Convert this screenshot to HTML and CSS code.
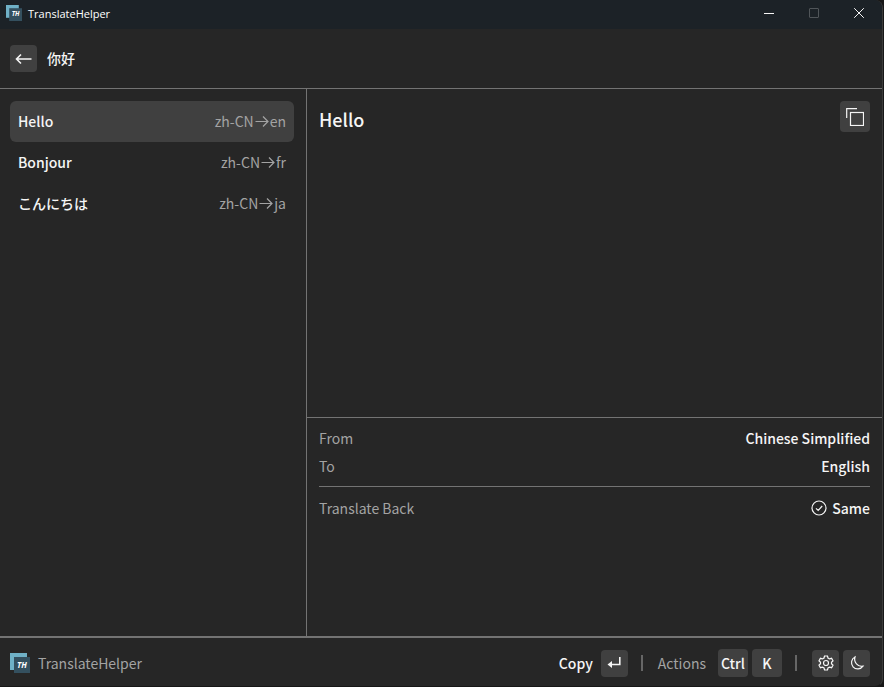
FILE: index.html
```
<!DOCTYPE html>
<html lang="en">
<head>
<meta charset="utf-8">
<title>TranslateHelper</title>
<meta name="viewport" content="width=device-width, initial-scale=1">
<link rel="stylesheet" href="styles.css">
</head>
<body>
<div class="window">
  <header class="titlebar">
    <svg class="logo-small" viewBox="0 0 20 20" aria-hidden="true"><path fill="#6fb1c7" d="M0 0h16v16H0z"/><path fill="#34505f" d="M4 4h16v16H4z"/><text x="12" y="14">TH</text></svg>
    <span class="window-title">TranslateHelper</span>
    <div class="window-controls">
      <button type="button" aria-label="Minimize"><svg viewBox="0 0 10 10"><path d="M0 5.500h10"/></svg></button>
      <button type="button" aria-label="Maximize" disabled><svg viewBox="0 0 10 10"><rect x=".5" y=".5" width="9" height="9" rx=".5"/></svg></button>
      <button type="button" aria-label="Close"><svg viewBox="0 0 10 10"><path d="M.2.2l9.600 9.600M9.800.2L.2 9.800"/></svg></button>
    </div>
  </header>
  <div class="query">
    <button class="key" type="button" aria-label="Back"><svg class="back-icon" viewBox="0 0 18 14"><path d="M16.500 7H1.500M6 2.500L1.500 7 6 11.500"/></svg></button>
    <h1 lang="zh-CN">你好</h1>
  </div>
  <main class="content">
    <ul class="results">
      <li><button class="result selected" type="button"><span>Hello</span><span class="pair">zh-CN<svg viewBox="0 0 14 14"><path d="M.5 7.500h12.500M8 2.500l5 5-5 5"/></svg>en</span></button></li>
      <li><button class="result" type="button"><span>Bonjour</span><span class="pair">zh-CN<svg viewBox="0 0 14 14"><path d="M.5 7.500h12.500M8 2.500l5 5-5 5"/></svg>fr</span></button></li>
      <li><button class="result" type="button"><span lang="ja">こんにちは</span><span class="pair">zh-CN<svg viewBox="0 0 14 14"><path d="M.5 7.500h12.500M8 2.500l5 5-5 5"/></svg>ja</span></button></li>
    </ul>
    <section class="detail">
      <div class="translation">
        <h2>Hello</h2>
        <button class="key copy" type="button" aria-label="Copy translation"><svg viewBox="0 0 18 18"><path d="M.7 10V.7H11"/><rect x="4.500" y="4.500" width="13" height="13"/></svg></button>
      </div>
      <dl class="meta">
        <div><dt>From</dt><dd>Chinese Simplified</dd></div>
        <div><dt>To</dt><dd>English</dd></div>
        <div class="back"><dt>Translate Back</dt><dd><svg viewBox="0 0 16 16"><circle cx="8" cy="8" r="7"/><path d="M5 8.300l2.200 2.200L11.200 6"/></svg>Same</dd></div>
      </dl>
    </section>
  </main>
  <footer class="statusbar">
    <svg class="logo" viewBox="0 0 20 20" aria-hidden="true"><path fill="#6fb1c7" d="M0 0h17v17H0z"/><path fill="#34505f" d="M4 4h16v16H4z"/><text x="12" y="15">TH</text></svg>
    <span class="app-name">TranslateHelper</span>
    <span class="copy-label">Copy</span>
    <button class="key" type="button" aria-label="Enter"><svg class="enter-icon" viewBox="0 0 14 12"><path d="M12.800 0v7.500H3"/><path class="solid" d="M5 4v7L.5 7.500z"/></svg></button>
    <span class="divider"></span>
    <span class="actions-label">Actions</span>
    <kbd class="key wide">Ctrl</kbd>
    <kbd class="key wide">K</kbd>
    <span class="divider"></span>
    <button class="key" type="button" aria-label="Settings"><svg class="round-icon" viewBox="0 0 16 16"><circle cx="8" cy="8" r="2.500"/><path d="M6.500 1h3l.5 2 1.500.9 2.100-.6 1.400 2.500L13.500 7.200v1.600l1.500 1.400-1.400 2.500-2.100-.6L10 13l-.5 2h-3L6 13l-1.500-.9-2.100.6L1 10.200l1.500-1.400V7.200L1 5.800l1.400-2.500 2.100.6L6 3z"/></svg></button>
    <button class="key" type="button" aria-label="Dark theme"><svg class="round-icon" viewBox="0 0 16 16"><path d="M6 2A6.300 6.300 0 1 0 14 11.200 7.200 7.200 0 0 1 6 2z"/></svg></button>
  </footer>
</div>
</body>
</html>
```
FILE: styles.css
```
* { box-sizing: border-box; }

body {
  margin: 0;
  background: #171717;
  color: #f5f5f5;
  font: 500 14px/20px "Noto Sans CJK SC", "Noto Sans CJK JP", sans-serif;
}

button {
  font: inherit;
  color: inherit;
  border: 0;
  padding: 0;
  background: none;
}

svg {
  fill: none;
  stroke: currentColor;
  stroke-width: 1.2;
  flex: none;
}

svg text {
  fill: #fff;
  font: italic 700 8px "Open Sans", sans-serif;
  text-anchor: middle;
}

h1, h2, ul, dl, dd { margin: 0; padding: 0; }

.window {
  display: flex;
  flex-direction: column;
  height: 100vh;
  margin-right: 1px;
  background: #262626;
  border-right: 1px solid #3b3b3b;
  border-bottom: 1px solid #171717;
  border-radius: 0 8px 8px 0;
  overflow: hidden;
}

.titlebar {
  display: flex;
  align-items: center;
  height: 29px;
  padding: 0 1px 0 6px;
  background: #1c2227;
}

.logo-small { width: 16px; height: 16px; stroke: none; margin-bottom: 3px; }

.window-title {
  margin-left: 6px;
  padding-bottom: 2px;
  font: 11px/16px "Open Sans", sans-serif;
  color: #fff;
}

.window-controls { display: flex; margin-left: auto; height: 100%; }

.window-controls button {
  display: grid;
  place-items: center;
  width: 45px;
  padding-bottom: 3px;
}

.window-controls svg { width: 10px; height: 10px; stroke-width: 1; }
.window-controls button:disabled { color: #505559; }

.query {
  display: flex;
  align-items: center;
  gap: 10px;
  height: 60px;
  padding: 0 10px;
  border-bottom: 1px solid #737373;
}

h1 { padding-bottom: 2px; font-size: 14px; font-weight: 500; }

.key {
  display: grid;
  place-items: center;
  width: 27px;
  height: 27px;
  border-radius: 4px;
  background: #404040;
  font: inherit;
}

.back-icon { width: 18px; height: 14px; stroke-width: 1.6; }

.content {
  display: grid;
  grid-template-columns: 307px 1fr;
  flex: 1;
  min-height: 0;
}

.results {
  list-style: none;
  padding: 12px;
  padding-left: 10px;
  border-right: 1px solid #737373;
}

.result {
  display: flex;
  align-items: center;
  justify-content: space-between;
  width: 100%;
  height: 41px;
  padding: 0 8px 2px;
  border-radius: 6px;
}

.selected { background: #404040; }

.pair {
  display: flex;
  align-items: center;
  gap: 1px;
  font-weight: 400;
  color: #a3a3a3;
}

.pair svg { width: 14px; height: 14px; }

.detail { display: grid; grid-template-rows: 3fr 2fr; }

.translation {
  display: flex;
  align-items: flex-start;
  justify-content: space-between;
  padding: 12px;
}

h2 { font-size: 18px; line-height: 36px; font-weight: 500; }

.copy { width: 30px; height: 31px; }
.copy svg { width: 18px; height: 18px; }

.meta {
  padding: 6px 12px;
  border-top: 1px solid #737373;
}

.meta div {
  display: flex;
  align-items: center;
  justify-content: space-between;
  height: 28px;
}

.meta dt { color: #a3a3a3; font-weight: 400; }
.meta dd { display: flex; align-items: center; gap: 5px; }
.meta svg { width: 16px; height: 16px; }

.meta .back {
  height: 42px;
  margin-top: 6px;
  border-top: 1px solid #737373;
}

.statusbar {
  display: flex;
  align-items: center;
  height: 50px;
  padding: 2px 12px 0 10px;
  border-top: 2px solid #737373;
}

.logo { width: 20px; height: 20px; stroke: none; }
.app-name { margin-left: 8px; margin-right: auto; color: #a3a3a3; font-weight: 400; }
.copy-label { margin-right: 8px; }
.wide { width: 30px; height: 28px; }
.wide + .wide { margin-left: 4px; }
.actions-label { margin-right: 12px; color: #a3a3a3; font-weight: 400; }
.divider { width: 2px; height: 16px; margin: 0 15px 0 13px; background: #666; }
.enter-icon { width: 14px; height: 12px; stroke-width: 1.6; }
.enter-icon .solid { fill: currentColor; stroke: none; }
.round-icon { width: 16px; height: 16px; }
.statusbar button + button { margin-left: 4px; }
```
